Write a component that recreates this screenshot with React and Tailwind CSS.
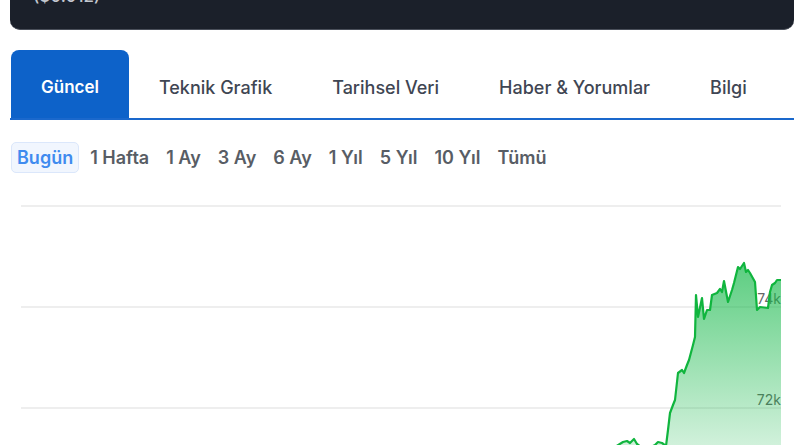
import React from "react";

const tabs = ["Güncel", "Teknik Grafik", "Tarihsel Veri", "Haber & Yorumlar", "Bilgi"];
const ranges = ["Bugün", "1 Hafta", "1 Ay", "3 Ay", "6 Ay", "1 Yıl", "5 Yıl", "10 Yıl", "Tümü"];

// price line, page coordinates
const pts = [
  [21, 470], [200, 466], [400, 460], [560, 455], [600, 451], [615, 447],
  [623, 442], [627, 441], [630, 443], [634, 439], [637, 444], [645, 450],
  [655, 445], [658, 442], [662, 443], [666, 446], [668, 430], [670, 413],
  [673, 405], [675, 400], [678, 373], [682, 370], [684, 373], [687, 365],
  [689, 360], [693, 345], [695, 337], [696, 295], [698, 317], [702, 298],
  [704, 319], [707, 310], [710, 310], [712, 295], [717, 293], [720, 289],
  [722, 292], [724, 281], [728, 302], [732, 290], [734, 283], [738, 267],
  [740, 269], [742, 266], [744, 263], [746, 272], [748, 270], [750, 273],
  [755, 282], [757, 310], [760, 307], [768, 308], [770, 292], [772, 285],
  [775, 283], [777, 280], [781, 280],
];

function PriceChart() {
  const line = pts.map((p, i) => (i ? "L" : "M") + p[0] + " " + p[1]).join(" ");
  const area = line + " L781 445 L21 445 Z";
  return (
    <svg viewBox="10 185 784 260" width="784" height="260" className="block mt-[12px]">
      <defs>
        <linearGradient id="fill" x1="0" y1="263" x2="0" y2="445" gradientUnits="userSpaceOnUse">
          <stop offset="0" stopColor="#16b84a" stopOpacity="0.7" />
          <stop offset="1" stopColor="#16b84a" stopOpacity="0.2" />
        </linearGradient>
      </defs>
      {[206, 307, 408].map((y) => (
        <line key={y} x1="21" x2="781" y1={y} y2={y} stroke="#e8e8e8" strokeWidth="1.5" />
      ))}
      <text x="781" y="304" textAnchor="end" fontSize="14" fill="#666" fontFamily="Inter, sans-serif">74k</text>
      <text x="781" y="405" textAnchor="end" fontSize="14" fill="#666" fontFamily="Inter, sans-serif">72k</text>
      <path d={area} fill="url(#fill)" />
      <path d={line} fill="none" stroke="#10b53e" strokeWidth="2.2" strokeLinejoin="round" />
    </svg>
  );
}

export default function App() {
  return (
    <div className="min-h-screen bg-white pl-[10px] pr-[6px] font-['Inter',sans-serif] overflow-hidden">
      {/* Price card (scrolled) */}
      <div className="-mt-[16px] pb-[21px] rounded-b-[10px] bg-[#1b202a] border-b border-[#4a4f5a] px-[23px]">
        <p className="text-[17px] leading-6 text-[#c3c7cf] font-medium">($0.012)</p>
      </div>

      {/* Tabs */}
      <div className="mt-[20px] flex border-b-2 border-[#1a68cc]">
        {tabs.map((t, i) => (
          <button
            key={t}
            className={
              i === 0
                ? "ml-px h-[68px] pt-[7px] px-[30px] rounded-t-[8px] bg-[#0d62c9] text-white font-semibold text-[17px]"
                : "h-[68px] pt-[7px] px-[30px] text-[#3f4653] font-medium text-[18px]"
            }
          >
            {t}
          </button>
        ))}
      </div>

      {/* Ranges */}
      <div className="mt-[22px] flex gap-[5px] [word-spacing:1px]">
        {ranges.map((r, i) => (
          <button
            key={r}
            className={
              i === 0
                ? "ml-px h-[31px] px-[5px] rounded-[5px] border border-[#dbe7fb] bg-[#f1f6fe] text-[#3f8bef] font-semibold text-[18px]"
                : "h-[31px] px-[6px] text-[#585d65] font-semibold text-[18px]"
            }
          >
            {r}
          </button>
        ))}
      </div>

      <PriceChart />
    </div>
  );
}
